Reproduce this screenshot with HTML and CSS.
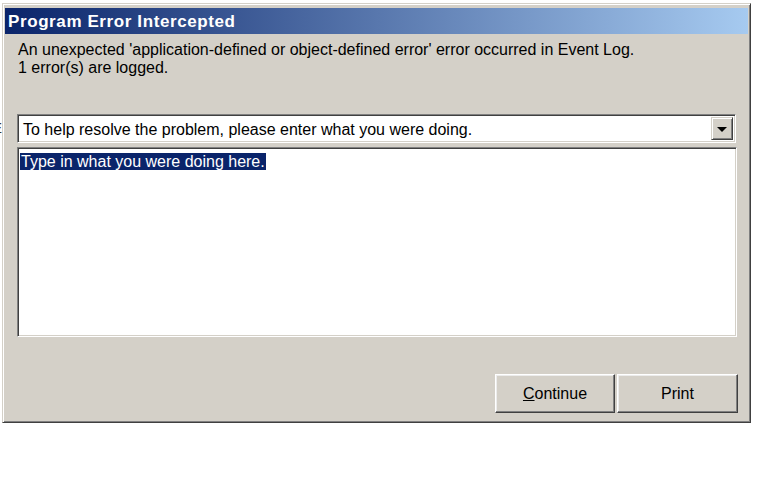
FILE: index.html
```html
<!DOCTYPE html>
<html>
<head>
<meta charset="utf-8">
<link rel="stylesheet" href="styles.css">
</head>
<body>
<span class="edge-glyph">E</span>
<div class="window">
  <div class="titlebar">Program Error Intercepted</div>
  <div class="content">
    <div class="message">
      <div>An unexpected 'application-defined or object-defined error' error occurred in Event Log.</div>
      <div>1 error(s) are logged.</div>
    </div>
    <div class="combo">
      <div class="combo-text">To help resolve the problem, please enter what you were doing.</div>
      <div class="combo-btn"><span class="arrow"></span></div>
    </div>
    <div class="textarea"><span class="sel">Type in what you were doing here.</span></div>
    <div class="buttons">
      <div class="btn btn-continue"><u>C</u>ontinue</div>
      <div class="btn">Print</div>
    </div>
  </div>
</div>
</body>
</html>
```
FILE: styles.css
```css
html, body {
  margin: 0;
  padding: 0;
  background: #ffffff;
  font-family: "Liberation Sans", Arial, sans-serif;
  font-size: 16px;
  color: #000;
}

body {
  position: relative;
  width: 769px;
  height: 494px;
  overflow: hidden;
}

.edge-glyph {
  position: absolute;
  left: -8px;
  top: 119px;
  font-size: 15px;
  color: #333;
}

.window {
  box-sizing: border-box;
  margin: 3px 0 0 2px;
  width: 749px;
  height: 420px;
  background: #d4d0c8;
  border-top: 1px solid #d4d0c8;
  border-left: 1px solid #d4d0c8;
  border-right: 1px solid #404040;
  border-bottom: 1px solid #404040;
  box-shadow: inset 1px 1px 0 #ffffff, inset -1px -1px 0 #808080;
  padding: 4px 2px 2px 2px;
  display: flex;
  flex-direction: column;
}

.titlebar {
  height: 26px;
  line-height: 27px;
  padding-left: 3px;
  color: #ffffff;
  font-weight: bold;
  font-size: 17px;
  letter-spacing: 0.6px;
  background: linear-gradient(to right, #0a246a, #a6caf0);
}

.content {
  padding: 7px 10px 0 12px;
  display: flex;
  flex-direction: column;
  flex: 1;
}

.message {
  line-height: 18px;
  padding-left: 1px;
}

.combo {
  box-sizing: border-box;
  margin-top: 37px;
  width: 719px;
  height: 29px;
  background: #ffffff;
  border-top: 1px solid #808080;
  border-left: 1px solid #808080;
  border-right: 1px solid #ffffff;
  border-bottom: 1px solid #ffffff;
  box-shadow: inset 1px 1px 0 #404040, inset -1px -1px 0 #d4d0c8;
  padding: 2px;
  display: flex;
  align-items: stretch;
}

.combo-text {
  flex: 1;
  padding-left: 3px;
  line-height: 25px;
  white-space: nowrap;
}

.combo-btn {
  box-sizing: border-box;
  width: 22px;
  background: #d4d0c8;
  border-top: 1px solid #d4d0c8;
  border-left: 1px solid #d4d0c8;
  border-right: 1px solid #404040;
  border-bottom: 1px solid #404040;
  box-shadow: inset 1px 1px 0 #ffffff, inset -1px -1px 0 #808080;
  display: flex;
  align-items: center;
  justify-content: center;
}

.arrow {
  width: 0;
  height: 0;
  border-left: 5px solid transparent;
  border-right: 5px solid transparent;
  border-top: 5px solid #000;
  margin-top: 1px;
}

.textarea {
  box-sizing: border-box;
  margin-top: 4px;
  width: 720px;
  height: 190px;
  background: #ffffff;
  border-top: 1px solid #808080;
  border-left: 1px solid #808080;
  border-right: 1px solid #ffffff;
  border-bottom: 1px solid #ffffff;
  box-shadow: inset 1px 1px 0 #404040, inset -1px -1px 0 #d4d0c8;
  padding: 4px 2px;
  line-height: 19px;
}

.sel {
  background: #0a246a;
  color: #ffffff;
  padding: 0 1px 0 1px;
}

.buttons {
  margin-top: 37px;
  display: flex;
  justify-content: flex-end;
  gap: 2px;
}

.btn {
  box-sizing: border-box;
  width: 121px;
  height: 39px;
  background: #d4d0c8;
  border-top: 1px solid #ffffff;
  border-left: 1px solid #ffffff;
  border-right: 1px solid #404040;
  border-bottom: 1px solid #404040;
  box-shadow: inset -1px -1px 0 #808080, inset 1px 1px 0 #ececec;
  display: flex;
  align-items: center;
  justify-content: center;
}

.btn-continue {
  width: 120px;
}
```
